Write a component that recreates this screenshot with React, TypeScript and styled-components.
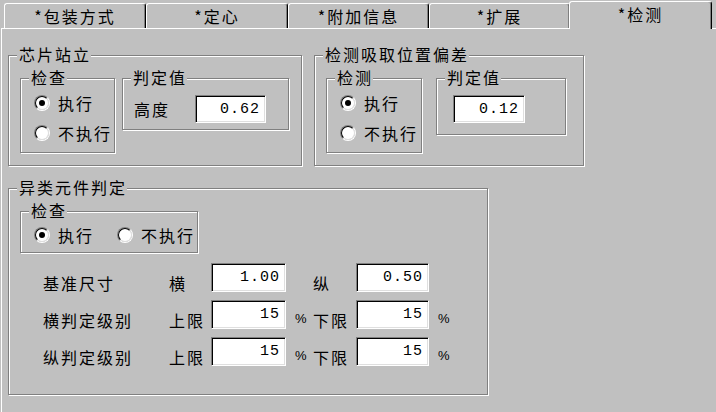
import React from "react";
import styled, { createGlobalStyle } from "styled-components";

const Global = createGlobalStyle`
  html, body { margin: 0; padding: 0; background: #c0c0c0; }
  #root { width: 716px; height: 412px; }
`;

const Window = styled.div`
  width: 716px;
  height: 412px;
  overflow: hidden;
  background: #c0c0c0;
  color: #000;
  font-family: "Noto Sans CJK SC", "Noto Sans", sans-serif;
  font-size: 16px;
  letter-spacing: 2px;
  display: flex;
  flex-direction: column;
`;

const TabStrip = styled.div`
  height: 28px;
  display: flex;
  align-items: flex-end;
  padding-left: 4px;
  flex-shrink: 0;
`;

const Tab = styled.div<{ $w: number; $active?: boolean }>`
  box-sizing: border-box;
  position: relative;
  z-index: ${(p) => (p.$active ? 1 : 0)};
  width: ${(p) => p.$w}px;
  height: ${(p) => (p.$active ? 28 : 25)}px;
  margin: ${(p) => (p.$active ? "0 0 -1px -1px" : "0")};
  background: #c0c0c0;
  border-top: 1px solid #fff;
  border-left: 1px solid #fff;
  border-right: 1px solid #000;
  border-radius: 3px 3px 0 0;
  box-shadow: inset -1px 0 0 #808080;
  display: flex;
  align-items: center;
  justify-content: center;
  line-height: 18px;
  padding-bottom: ${(p) => (p.$active ? 4 : 0)}px;
  white-space: nowrap;
`;

const Panel = styled.div`
  flex: 1;
  margin-left: 1px;
  border-top: 1px solid #fff;
  border-left: 1px solid #fff;
  padding: 26px 0 0 6px;
`;

const Row = styled.div<{ $gap: number; $center?: boolean }>`
  display: flex;
  gap: ${(p) => p.$gap}px;
  align-items: ${(p) => (p.$center ? "center" : "flex-start")};
`;

const Group = styled.div<{ $w: number; $h: number; $pad: string; $mt?: number }>`
  position: relative;
  box-sizing: border-box;
  flex-shrink: 0;
  width: ${(p) => p.$w}px;
  height: ${(p) => p.$h}px;
  margin-top: ${(p) => p.$mt ?? 0}px;
  padding: ${(p) => p.$pad};
  border: 1px solid #808080;
  box-shadow: inset 1px 1px 0 #fff, 1px 1px 0 #fff;
`;

const Caption = styled.span`
  position: absolute;
  top: -11px;
  left: 8px;
  padding: 0 0 0 2px;
  background: #c0c0c0;
  line-height: 18px;
  white-space: nowrap;
`;

const RadioStack = styled.div<{ $horizontal?: boolean; $gap: number }>`
  display: flex;
  flex-direction: ${(p) => (p.$horizontal ? "row" : "column")};
  gap: ${(p) => p.$gap}px;
`;

const RadioItem = styled.label`
  display: flex;
  align-items: center;
  gap: 8px;
  line-height: 18px;
  white-space: nowrap;
`;

const RadioRing = styled.span`
  box-sizing: border-box;
  width: 16px;
  height: 16px;
  border-radius: 50%;
  border: 1px solid;
  border-color: #808080 #fff #fff #808080;
  display: flex;
  flex-shrink: 0;
`;

const RadioWell = styled.span<{ $on: boolean }>`
  flex: 1;
  border-radius: 50%;
  border: 1px solid;
  border-color: #000 #dfdfdf #dfdfdf #000;
  background: #fff;
  display: flex;
  align-items: center;
  justify-content: center;
  &::after {
    content: "";
    width: 6px;
    height: 6px;
    border-radius: 50%;
    background: #000;
    display: ${(p) => (p.$on ? "block" : "none")};
  }
`;

const Label = styled.span`
  line-height: 18px;
  white-space: nowrap;
`;

const Field = styled.div<{ $w: number; $h: number }>`
  box-sizing: border-box;
  width: ${(p) => p.$w}px;
  height: ${(p) => p.$h}px;
  background: #fff;
  border: 1px solid;
  border-color: #808080 #fff #fff #808080;
  box-shadow: inset 1px 1px 0 #000, inset -1px -1px 0 #dfdfdf;
  display: flex;
  align-items: center;
  justify-content: flex-end;
  padding-right: 5px;
  font-family: "Liberation Mono", monospace;
  font-size: 15px;
  letter-spacing: 1px;
`;

const SizeGrid = styled.div`
  display: grid;
  grid-template-columns: 126px 42px 75px 27px 43px 73px auto;
  grid-auto-rows: 29px;
  row-gap: 8px;
  margin: 10px 0 0 23px;
`;

const GridLabel = styled.span`
  align-self: end;
  line-height: 18px;
  white-space: nowrap;
`;

const Percent = styled.span`
  align-self: end;
  padding-left: 9px;
  margin-bottom: 4px;
  font-family: "Liberation Sans", sans-serif;
  font-size: 13px;
  line-height: 13px;
  letter-spacing: 0;
`;

const Radio = ({ on, children }: { on: boolean; children: React.ReactNode }) => (
  <RadioItem>
    <RadioRing>
      <RadioWell $on={on} />
    </RadioRing>
    {children}
  </RadioItem>
);

const tabs: { label: string; w: number; active?: boolean }[] = [
  { label: "*包装方式", w: 142 },
  { label: "*定心", w: 142 },
  { label: "*附加信息", w: 141 },
  { label: "*扩展", w: 141 },
  { label: "*检测", w: 143, active: true },
];

export default function App() {
  return (
    <>
      <Global />
      <Window>
        <TabStrip>
          {tabs.map((t) => (
            <Tab key={t.label} $w={t.w} $active={t.active}>
              {t.label}
            </Tab>
          ))}
        </TabStrip>
        <Panel>
          <Row $gap={12}>
            <Group $w={294} $h={111} $pad="22px 0 0 11px">
              <Caption>芯片站立</Caption>
              <Row $gap={7}>
                <Group $w={95} $h={75} $pad="15px 0 0 13px">
                  <Caption>检查</Caption>
                  <RadioStack $gap={12}>
                    <Radio on>执行</Radio>
                    <Radio on={false}>不执行</Radio>
                  </RadioStack>
                </Group>
                <Group $w={167} $h={52} $pad="16px 0 0 11px">
                  <Caption>判定值</Caption>
                  <Row $gap={25} $center>
                    <Label>高度</Label>
                    <Field $w={71} $h={28}>0.62</Field>
                  </Row>
                </Group>
              </Row>
            </Group>
            <Group $w={270} $h={111} $pad="22px 0 0 11px">
              <Caption>检测吸取位置偏差</Caption>
              <Row $gap={14}>
                <Group $w={96} $h={75} $pad="15px 0 0 13px">
                  <Caption>检测</Caption>
                  <RadioStack $gap={12}>
                    <Radio on>执行</Radio>
                    <Radio on={false}>不执行</Radio>
                  </RadioStack>
                </Group>
                <Group $w={130} $h={57} $pad="16px 0 0 16px">
                  <Caption>判定值</Caption>
                  <Field $w={72} $h={28}>0.12</Field>
                </Group>
              </Row>
            </Group>
          </Row>
          <Group $w={480} $h={207} $pad="22px 0 0 11px" $mt={22}>
            <Caption>异类元件判定</Caption>
            <Group $w={178} $h={42} $pad="14px 0 0 13px">
              <Caption>检查</Caption>
              <RadioStack $horizontal $gap={23}>
                <Radio on>执行</Radio>
                <Radio on={false}>不执行</Radio>
              </RadioStack>
            </Group>
            <SizeGrid>
              <GridLabel>基准尺寸</GridLabel>
              <GridLabel>横</GridLabel>
              <Field $w={75} $h={29}>1.00</Field>
              <span />
              <GridLabel>纵</GridLabel>
              <Field $w={73} $h={29}>0.50</Field>
              <span />

              <GridLabel>横判定级别</GridLabel>
              <GridLabel>上限</GridLabel>
              <Field $w={75} $h={29}>15</Field>
              <Percent>%</Percent>
              <GridLabel>下限</GridLabel>
              <Field $w={73} $h={29}>15</Field>
              <Percent>%</Percent>

              <GridLabel>纵判定级别</GridLabel>
              <GridLabel>上限</GridLabel>
              <Field $w={75} $h={29}>15</Field>
              <Percent>%</Percent>
              <GridLabel>下限</GridLabel>
              <Field $w={73} $h={29}>15</Field>
              <Percent>%</Percent>
            </SizeGrid>
          </Group>
        </Panel>
      </Window>
    </>
  );
}
